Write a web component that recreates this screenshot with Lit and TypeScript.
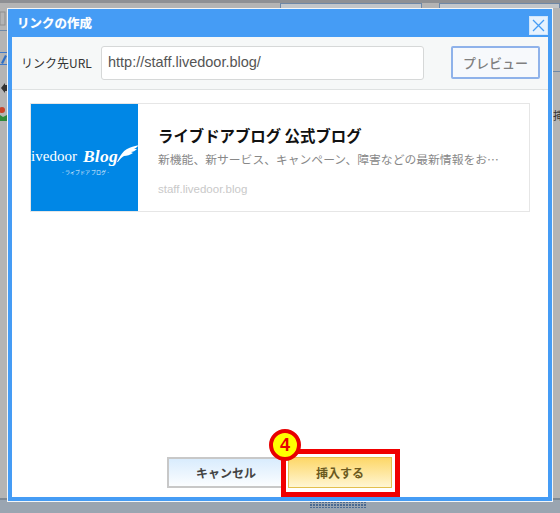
import { LitElement, html, css } from "lit";
import { customElement } from "lit/decorators.js";

const JP = css`"Noto Sans CJK JP", "Liberation Sans", sans-serif`;

@customElement("app-root")
export class AppRoot extends LitElement {
  static styles = css`
    :host {
      display: block;
      position: relative;
      width: 560px;
      height: 513px;
      overflow: hidden;
      background: #b4b4b4;
      font-family: "Liberation Sans", "Noto Sans CJK JP", sans-serif;
    }
    .backdrop {
      display: flex;
      flex-direction: column;
      height: 513px;
    }
    .top-strip {
      height: 3px;
      background: #8e9094;
      flex: none;
    }
    .top-tabs {
      height: 5px;
      flex: none;
      display: flex;
      padding-left: 280px;
      gap: 17px;
    }
    .top-tabs span {
      height: 5px;
      box-sizing: border-box;
      border: 1px solid #6f88a6;
      border-bottom: 0;
      background: #c2c6ca;
    }
    .top-tabs .a { width: 142px; }
    .top-tabs .b { flex: 1; }
    .mid {
      flex: 1;
      position: relative;
    }
    .bottom-line {
      height: 2px;
      background: #7e8893;
      flex: none;
    }
    .bottom-band {
      height: 13px;
      background: #9aa5b1;
      flex: none;
      display: flex;
      padding: 1px 0 0 310px;
      box-sizing: border-box;
    }
    .grip {
      width: 57px;
      height: 7px;
      background-image: radial-gradient(circle at 1px 1px, #4a6a92 0.9px, transparent 1.1px);
      background-size: 3px 3px;
    }
    .side-l {
      position: absolute;
      left: 0;
      top: 0;
      width: 7px;
      height: 100%;
    }
    .side-l svg { display: block; }
    .side-r {
      position: absolute;
      left: 553px;
      top: 0;
      width: 7px;
      height: 100%;
      overflow: hidden;
    }
    .side-r svg { display: block; }
    .glyph {
      position: absolute;
      left: 0;
      top: 99px;
      font: 11px ${JP};
      color: #333;
    }

    .dialog {
      position: absolute;
      left: 7px;
      top: 8px;
      width: 546px;
      height: 494px;
      box-sizing: border-box;
      display: flex;
      flex-direction: column;
      background: #459cf5;
      border: 1px solid #f3f6f8;
      padding: 0 4px 4px 4px;
      font-family: ${JP};
    }
    .title {
      height: 28px;
      flex: none;
      display: flex;
      align-items: center;
      justify-content: space-between;
      color: #fff;
      font-size: 12.5px;
      font-weight: 700;
      padding-left: 5px;
    }
    .title .t { margin-top: -1px; text-shadow: 0 0 1px rgba(255,255,255,.5); }
    .close {
      width: 19px;
      height: 19px;
      box-sizing: border-box;
      margin-top: 4px;
      background: #e6f2fe;
      display: flex;
      align-items: center;
      justify-content: center;
      border: 1px solid #cfe5fb;
    }
    .panel {
      flex: 1;
      display: flex;
      flex-direction: column;
      background: #fff;
      min-height: 0;
    }
    .bar {
      height: 53px;
      flex: none;
      box-sizing: border-box;
      background: #f6f8f8;
      border-bottom: 1px solid #dfe2e2;
      display: flex;
      align-items: flex-start;
      padding: 9px 9px 0 9px;
    }
    .label {
      width: 80px;
      flex: none;
      font-size: 12px;
      line-height: 34px;
      color: #333;
      white-space: nowrap;
    }
    .input {
      width: 323px;
      height: 34px;
      box-sizing: border-box;
      flex: none;
      background: #fff;
      border: 1px solid #d6d8d8;
      border-radius: 3px;
      padding-left: 6px;
      font: 14.5px/31px "Liberation Sans", sans-serif;
      color: #555;
    }
    .preview {
      margin-left: 27px;
      width: 89px;
      height: 33px;
      box-sizing: border-box;
      flex: none;
      background: #f7f9fc;
      border: 2px solid #8fb2ea;
      border-radius: 2px;
      font-size: 13px;
      font-weight: 500;
      color: #808080;
      display: flex;
      align-items: center;
      justify-content: center;
      font-family: ${JP};
    }
    .body {
      flex: 1;
      padding: 13px 18px 0 18px;
      min-height: 0;
    }
    .card {
      height: 109px;
      box-sizing: border-box;
      border: 1px solid #e6e6e6;
      display: flex;
      background: #fff;
    }
    .thumb {
      width: 107px;
      height: 107px;
      flex: none;
      position: relative;
      overflow: hidden;
      background: #0087e6;
      color: #fff;
      display: flex;
      flex-direction: column;
      align-items: center;
      justify-content: center;
    }
    .logo {
      display: flex;
      align-items: center;
      white-space: nowrap;
      margin-top: 4px;
      height: 24px;
    }
    .lv {
      font: 15px "Liberation Serif", serif;
      margin-left: -3px;
    }
    .bl {
      font: italic 700 17.5px "Liberation Serif", serif;
      margin-left: 6px;
      letter-spacing: 0.3px;
    }
    .logo svg { margin-left: -1px; margin-top: -5px; flex: none; }
    .sub {
      font-size: 5px;
      line-height: 6px;
      margin-left: 2px;
      opacity: .9;
      white-space: nowrap;
    }
    .meta {
      padding: 21px 0 0 20px;
      min-width: 0;
      flex: 1;
    }
    .name {
      font-size: 15.4px;
      line-height: 20px;
      font-weight: 700;
      color: #111;
      white-space: nowrap;
    }
    .desc {
      margin-top: 6px;
      font-size: 11.8px;
      line-height: 16px;
      color: #888;
      white-space: nowrap;
    }
    .host {
      margin-top: 14px;
      font: 11.5px/16px "Liberation Sans", sans-serif;
      color: #c9c9c9;
    }
    .foot {
      flex: none;
      height: 40px;
      display: flex;
      align-items: flex-start;
      padding-left: 155px;
    }
    .btn {
      height: 31px;
      box-sizing: border-box;
      display: flex;
      align-items: center;
      justify-content: center;
      font-size: 12px;
      font-weight: 700;
      font-family: ${JP};
    }
    .cancel {
      width: 118px;
      border: 2px solid #c8c8c8;
      background: linear-gradient(#d9ecfd, #fbfdff);
      color: #444;
    }
    .insert {
      width: 104px;
      margin-left: 3px;
      border: 1px solid #e3c04e;
      background: linear-gradient(#fdd768, #fff6d3);
      color: #6c5a1f;
    }

    .mark {
      position: absolute;
      left: 281px;
      top: 449px;
      width: 119px;
      height: 48px;
      box-sizing: border-box;
      border: 5px solid #f00000;
    }
    .badge {
      position: absolute;
      left: 269px;
      top: 429px;
      width: 32px;
      height: 32px;
      box-sizing: border-box;
      border-radius: 50%;
      border: 4px solid #e80000;
      background: #ffff00;
      color: #e80000;
      font: 700 18px/24px "Liberation Sans", sans-serif;
      text-align: center;
    }
  `;

  render() {
    return html`
      <div class="backdrop">
        <div class="top-strip"></div>
        <div class="top-tabs"><span class="a"></span><span class="b"></span></div>
        <div class="mid">
          <div class="side-l">
            <svg width="7" height="120" viewBox="0 0 7 120">
              <rect x="0" y="4" width="5" height="13" fill="none" stroke="#8e8e8e" />
              <rect x="0" y="22" width="7" height="1" fill="#6f88a6" />
              <rect x="0" y="44" width="7" height="1" fill="#3d78c8" />
              <path d="M1 55 L5 47 L7 48 L3 56 Z" fill="#2f6fc4" />
              <rect x="0" y="56" width="7" height="1" fill="#3d78c8" />
              <path d="M1 80 L5 75 L5 77 L7 77 L7 83 L5 83 L5 85 Z" fill="#333" />
              <circle cx="2" cy="102" r="3" fill="#c8442a" />
              <path d="M0 107 L3 109 L7 107 L7 113 L0 113 Z" fill="#2f8a3a" />
            </svg>
          </div>
          <div class="side-r">
            <svg width="7" height="70" viewBox="0 0 7 70">
              <rect x="0" y="63" width="7" height="1" fill="#6f88a6" />
            </svg>
            <span class="glyph">挿</span>
          </div>
        </div>
        <div class="bottom-line"></div>
        <div class="bottom-band"><div class="grip"></div></div>
      </div>

      <div class="dialog">
        <div class="title">
          <span class="t">リンクの作成</span>
          <span class="close">
            <svg width="13" height="13" viewBox="0 0 13 13">
              <path d="M1 1 L12 12 M12 1 L1 12" stroke="#459cf5" stroke-width="1.3" fill="none" />
            </svg>
          </span>
        </div>
        <div class="panel">
          <div class="bar">
            <div class="label">リンク先URL</div>
            <div class="input">http://staff.livedoor.blog/</div>
            <div class="preview">プレビュー</div>
          </div>
          <div class="body">
            <div class="card">
              <div class="thumb">
                <div class="logo">
                  <span class="lv">livedoor</span>
                  <span class="bl">Blog</span>
                  <svg width="22" height="18" viewBox="0 0 22 18">
                    <path
                      d="M0 17 C3 11 6 6 10 4 C14 2 18 1 22 0 C20 2 19 3 17 4 L20 4 C18 6 16 7 14 7 L16 8 C13 10 10 11 7 11 C5 12 3 14 1 17 Z"
                      fill="#fff"
                    />
                  </svg>
                </div>
                <div class="sub">- ライブドア ブログ -</div>
              </div>
              <div class="meta">
                <div class="name">ライブドアブログ 公式ブログ</div>
                <div class="desc">新機能、新サービス、キャンペーン、障害などの最新情報をお…</div>
                <div class="host">staff.livedoor.blog</div>
              </div>
            </div>
          </div>
          <div class="foot">
            <div class="btn cancel">キャンセル</div>
            <div class="btn insert">挿入する</div>
          </div>
        </div>
      </div>

      <div class="mark"></div>
      <div class="badge">4</div>
    `;
  }
}
